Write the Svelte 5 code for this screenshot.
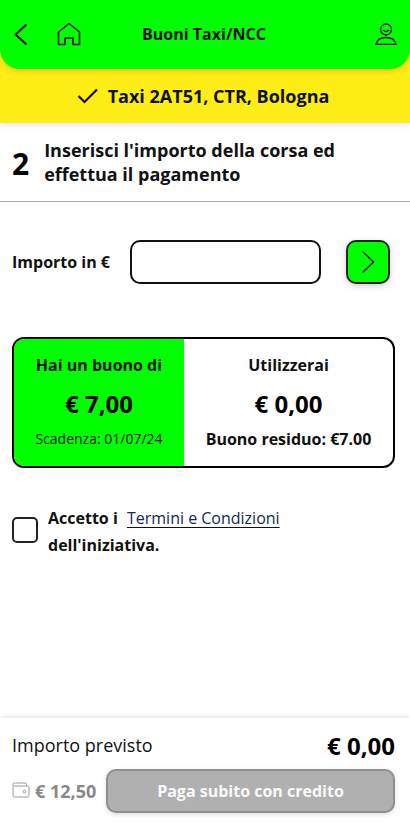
<script lang="ts">
	let amount = $state('');
	let accepted = $state(false);
</script>

<div class="page">
	<div class="top">
		<header class="header">
			<button class="icon-btn back" aria-label="Indietro">
				<svg width="16" height="26" viewBox="0 0 16 26" fill="none" stroke="#111" stroke-width="2">
					<path d="M12.5 3.5 L1.5 13.5 L12.5 23.5" />
				</svg>
			</button>
			<button class="icon-btn home" aria-label="Home">
				<svg width="24" height="24" viewBox="0 0 24 24" fill="none" stroke="#111" stroke-width="1.6">
					<path d="M1.5 22.5 V10 L12 1.5 L22.5 10 V22.5 H16 V16 H8 V22.5 Z" stroke-linejoin="round" />
				</svg>
			</button>
			<h1>Buoni Taxi/NCC</h1>
			<button class="icon-btn user" aria-label="Profilo">
				<svg width="22" height="22" viewBox="0 0 22 22" fill="none" stroke="#111" stroke-width="1.3">
					<circle cx="11" cy="6.5" r="5.5" />
					<path d="M8 7 Q11 10 14 7" />
					<path d="M1 21.3 C2 17 6 14.5 11 14.5 C16 14.5 20 17 21 21.3 Z" />
				</svg>
			</button>
		</header>
		<div class="taxi">
			<svg width="22" height="16" viewBox="0 0 22 16" fill="none" stroke="#111" stroke-width="2.2">
				<path d="M1.5 8 L7.5 14 L20 1.5" />
			</svg>
			<span>Taxi 2AT51, CTR, Bologna</span>
		</div>
	</div>

	<section class="step">
		<span class="step-num">2</span>
		<p>Inserisci l'importo della corsa ed effettua il pagamento</p>
	</section>

	<div class="amount-row">
		<label for="amount">Importo in €</label>
		<input id="amount" type="text" bind:value={amount} />
		<button class="go" aria-label="Avanti">
			<svg width="14" height="24" viewBox="0 0 14 24" fill="none" stroke="#111" stroke-width="1.5">
				<path d="M1.5 1.5 L12.5 12 L1.5 22.5" />
			</svg>
		</button>
	</div>

	<div class="voucher">
		<div class="col green">
			<span class="title">Hai un buono di</span>
			<strong>€ 7,00</strong>
			<span class="expiry">Scadenza: 01/07/24</span>
		</div>
		<div class="col">
			<span class="title">Utilizzerai</span>
			<strong>€ 0,00</strong>
			<span class="title">Buono residuo: €7.00</span>
		</div>
	</div>

	<div class="terms">
		<input type="checkbox" bind:checked={accepted} aria-label="Accetto" />
		<p>Accetto i <a href="#terms">Termini e Condizioni</a> dell'iniziativa.</p>
	</div>

	<footer class="footer">
		<div class="total">
			<span>Importo previsto</span>
			<strong>€ 0,00</strong>
		</div>
		<div class="pay">
			<div class="credit">
				<svg width="18" height="16" viewBox="0 0 18 16" fill="none" stroke="#999" stroke-width="1">
					<path d="M1 4 V2.5 Q1 1 2.5 1 H13 Q14.5 1 14.5 2.5 V4" />
					<rect x="1" y="4" width="16" height="11" rx="1.5" />
					<circle cx="12.5" cy="9.5" r="1.3" />
				</svg>
				<span>€ 12,50</span>
			</div>
			<button class="pay-btn" disabled>Paga subito con credito</button>
		</div>
	</footer>
</div>

<style>
	:global(body) {
		margin: 0;
		background: #fff;
	}

	.page {
		position: relative;
		height: 831px;
		overflow: hidden;
		font-family: 'Open Sans', sans-serif;
		color: #000;
		display: flex;
		flex-direction: column;
	}

	.top {
		background: #ffed16;
		box-shadow: 0 2px 6px rgba(0, 0, 0, 0.1);
	}

	.header {
		height: 69px;
		box-sizing: border-box;
		background: #00ff00;
		border-radius: 0 0 20px 20px;
		box-shadow: 0 2px 5px rgba(0, 0, 0, 0.15);
		position: relative;
		display: flex;
		align-items: center;
		padding: 0 13px 0 14px;
	}

	.header h1 {
		flex: 1;
		margin: 0;
		text-align: center;
		font-size: 16px;
		font-weight: 700;
		color: #111;
		padding-right: 48px;
		margin-top: -1px;
	}

	.icon-btn {
		background: none;
		border: 0;
		padding: 0;
		display: flex;
	}

	.back {
		margin-top: -1px;
	}

	.home {
		margin-left: 27px;
		margin-top: -1px;
	}

	.user {
		margin-top: -1px;
	}

	.taxi {
		height: 54px;
		display: flex;
		align-items: center;
		justify-content: center;
		gap: 9px;
		font-size: 18px;
		font-weight: 700;
		color: #111;
		padding-right: 4px;
	}

	.step {
		height: 78px;
		display: flex;
		align-items: center;
		gap: 15px;
		padding: 0 12px;
		border-bottom: 1px solid #aaa;
	}

	.step-num {
		font-size: 30px;
		font-weight: 700;
		line-height: 1;
		margin-top: 3px;
	}

	.step p {
		margin: 0;
		font-size: 18px;
		font-weight: 700;
		line-height: 24px;
		color: #111;
	}

	.amount-row {
		display: flex;
		align-items: center;
		padding: 38px 20px 0 12px;
	}

	.amount-row label {
		font-size: 16px;
		font-weight: 700;
		width: 118px;
		color: #111;
	}

	.amount-row input {
		width: 191px;
		height: 44px;
		box-sizing: border-box;
		border: 2px solid #111;
		border-radius: 10px;
		background: #fff;
		outline: none;
	}

	.go {
		margin-left: 25px;
		width: 44px;
		height: 44px;
		box-sizing: border-box;
		border: 2px solid #222;
		border-radius: 10px;
		background: #00ff00;
		box-shadow: 0 2px 6px rgba(0, 0, 0, 0.2);
		display: flex;
		align-items: center;
		justify-content: center;
		padding: 0;
	}

	.voucher {
		margin: 53px 15px 0 12px;
		height: 131px;
		box-sizing: border-box;
		border: 2px solid #000;
		border-radius: 12px;
		overflow: hidden;
		display: flex;
	}

	.col {
		flex: 1;
		display: flex;
		flex-direction: column;
		align-items: center;
		padding-top: 15px;
	}

	.col.green {
		flex: 0 0 170px;
		background: #00ff00;
	}

	.col .title {
		font-size: 16px;
		font-weight: 700;
		line-height: 22px;
		color: #111;
	}

	.col strong {
		font-size: 24px;
		font-weight: 700;
		line-height: 33px;
		margin-top: 11px;
		margin-bottom: 8px;
	}

	.col .expiry {
		font-size: 14px;
		line-height: 22px;
		color: #111;
	}

	.terms {
		display: flex;
		gap: 10px;
		margin: 40px 12px 0;
	}

	.terms input {
		appearance: none;
		width: 26px;
		height: 26px;
		box-sizing: border-box;
		margin: 9px 0 0 0;
		border: 2px solid #222;
		border-radius: 5px;
		background: #fff;
		flex: none;
	}

	.terms p {
		margin: -3px 0 0;
		font-size: 16px;
		font-weight: 700;
		line-height: 27px;
		width: 260px;
		color: #111;
	}

	.terms a {
		font-weight: 400;
		color: #102a52;
		margin-left: 5px;
		white-space: nowrap;
		text-decoration-color: #111;
		text-underline-offset: 3px;
	}

	.footer {
		position: absolute;
		left: 0;
		right: 0;
		bottom: 0;
		height: 113px;
		box-sizing: border-box;
		background: #fff;
		box-shadow: 0 -1px 5px rgba(0, 0, 0, 0.12);
		padding: 13px 15px 0 12px;
	}

	.total {
		display: flex;
		justify-content: space-between;
		align-items: center;
		height: 28px;
	}

	.total span {
		font-size: 18px;
		color: #111;
	}

	.total strong {
		font-size: 24px;
		font-weight: 700;
	}

	.pay {
		display: flex;
		align-items: center;
		justify-content: space-between;
		margin-top: 10px;
	}

	.credit {
		display: flex;
		align-items: center;
		gap: 5px;
		color: #888;
		font-size: 18px;
		font-weight: 700;
	}

	.credit svg {
		margin-top: -2px;
	}

	.pay-btn {
		width: 289px;
		height: 44px;
		border: 2px solid #8e8e8e;
		border-radius: 10px;
		background: #b0b0b0;
		color: #fafafa;
		font-family: inherit;
		font-size: 16px;
		font-weight: 700;
		box-shadow: 0 2px 5px rgba(0, 0, 0, 0.12);
	}
</style>
